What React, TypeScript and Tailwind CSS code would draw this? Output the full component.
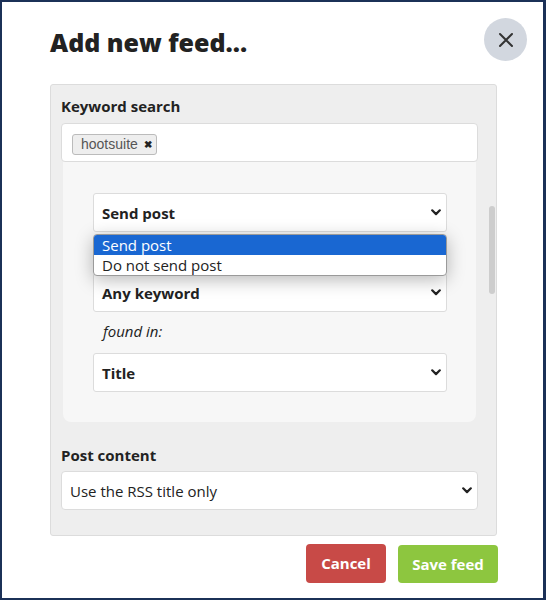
import React from "react";

function Chevron() {
  return (
    <svg width="10" height="7" viewBox="0 0 10 7" className="shrink-0">
      <path d="M1.2 1.3 L5 5.1 L8.8 1.3" fill="none" stroke="#222" strokeWidth="2.2" strokeLinecap="round" strokeLinejoin="round" />
    </svg>
  );
}

function FakeSelect({ label, bold = true, className = "" }: { label: string; bold?: boolean; className?: string }) {
  return (
    <div
      className={`h-[39px] border border-[#dcdcdc] rounded-[3px] bg-white flex items-center justify-between pl-[8px] pr-[5px] text-[15px] text-[#222] ${bold ? "font-bold" : "font-normal"} ${className}`}
    >
      <span className="mt-[1px]">{label}</span>
      <Chevron />
    </div>
  );
}

export default function App() {
  return (
    <div className="w-[546px] h-[600px] border-2 border-r-[3px] border-[#1b3157] bg-white overflow-hidden font-['Open_Sans',sans-serif] text-[#222]">
      <div className="pl-[48px] pr-[16px] pt-[16px] flex items-start justify-between">
        <h1 className="mt-[6px] text-[25px] leading-[36px] font-extrabold text-[#222]">Add new feed...</h1>
        <button className="w-[43px] h-[43px] rounded-full bg-[#d2d7df] flex items-center justify-center">
          <svg width="16" height="16" viewBox="0 0 16 16">
            <path d="M2 2 L14 14 M14 2 L2 14" stroke="#333" strokeWidth="2" strokeLinecap="round" />
          </svg>
        </button>
      </div>

      <div className="relative ml-[48px] mt-[23px] w-[447px] border border-[#dcdcdc] rounded-[3px] bg-[#eeeeee] pl-[10px] pr-[18px] pt-[11px] pb-[25px]">
        <div className="text-[15px] font-bold leading-[21px] mb-[6px] text-[#222]">Keyword search</div>
        <div className="h-[39px] border border-[#dcdcdc] rounded-[4px] bg-white flex items-center px-[10px]">
          <span className="mt-[4px] h-[21px] flex items-center gap-[6px] pl-[8px] pr-[4px] bg-[#eeeeee] border border-[#bbbbbb] rounded-[3px] font-['Liberation_Sans',sans-serif] text-[14px] text-[#555]">
            hootsuite
            <span className="text-[10px] text-[#222] font-bold">✖</span>
          </span>
        </div>
        <div className="relative mx-[2px] bg-[#f7f7f7] rounded-b-[8px] pt-[31px] pb-[30px] pl-[30px] pr-[29px]">
          <FakeSelect label="Send post" />
          <FakeSelect label="Any keyword" className="mt-[41px] bg-[#efefef]" />
          <div className="mt-[9px] pl-[10px] text-[15px] leading-[21px] italic text-[#222]">found in:</div>
          <FakeSelect label="Title" className="mt-[11px]" />

          <div className="absolute left-[30px] top-[72px] w-[354px] h-[42px] border border-[#9a9a9a] rounded-[4px] bg-white overflow-hidden shadow-[0_4px_18px_rgba(0,0,0,0.28)] text-[15px] leading-[20px]">
            <div className="h-[20px] bg-[#1967d2] text-white pl-[8px]">Send post</div>
            <div className="h-[20px] text-[#222] pl-[8px]">Do not send post</div>
          </div>
        </div>

        <div className="mt-[23px] text-[15px] font-bold leading-[21px] mb-[5px] text-[#222]">Post content</div>
        <FakeSelect label="Use the RSS title only" bold={false} className="rounded-[4px]" />

        <div className="absolute left-[438px] top-[121px] w-[6px] h-[88px] rounded-full bg-[#cdcdcd]" />
      </div>

      <div className="ml-[48px] w-[448px] mt-[8px] flex justify-end gap-[12px]">
        <button className="w-[80px] h-[39px] rounded-[4px] bg-[#c84a47] text-white font-bold text-[15px]">Cancel</button>
        <button className="w-[100px] h-[38px] mt-[1px] rounded-[4px] bg-[#8dc63f] text-white font-bold text-[15px]">Save feed</button>
      </div>
    </div>
  );
}
